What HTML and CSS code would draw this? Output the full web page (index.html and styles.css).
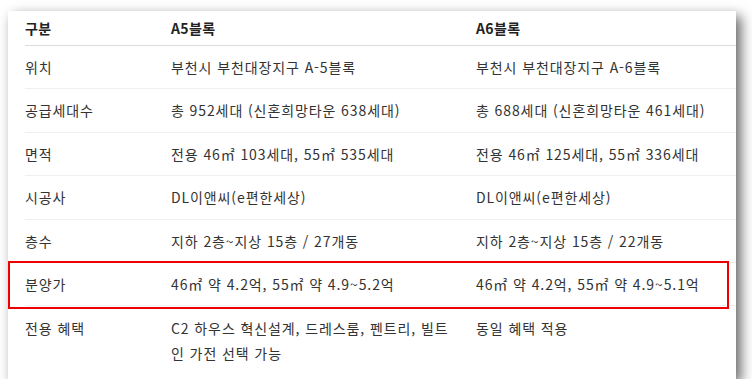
FILE: index.html
```html
<!DOCTYPE html>
<html lang="ko">
<head>
<meta charset="utf-8">
<link rel="stylesheet" href="styles.css">
</head>
<body>
<div class="card">
  <table class="spec">
    <colgroup><col class="c1"><col class="c2"><col class="c3"></colgroup>
    <thead>
      <tr><th>구분</th><th>A5블록</th><th>A6블록</th></tr>
    </thead>
    <tbody>
      <tr><td>위치</td><td>부천시 부천대장지구 A-5블록</td><td>부천시 부천대장지구 A-6블록</td></tr>
      <tr><td>공급세대수</td><td>총 952세대 (신혼희망타운 638세대)</td><td>총 688세대 (신혼희망타운 461세대)</td></tr>
      <tr><td>면적</td><td>전용 46㎡ 103세대, 55㎡ 535세대</td><td>전용 46㎡ 125세대, 55㎡ 336세대</td></tr>
      <tr><td>시공사</td><td>DL이앤씨(e편한세상)</td><td>DL이앤씨(e편한세상)</td></tr>
      <tr><td>층수</td><td>지하 2층~지상 15층 / 27개동</td><td>지하 2층~지상 15층 / 22개동</td></tr>
      <tr><td>분양가</td><td>46㎡ 약 4.2억, 55㎡ 약 4.9~5.2억</td><td>46㎡ 약 4.2억, 55㎡ 약 4.9~5.1억</td></tr>
      <tr><td>전용 혜택</td><td>C2 하우스 혁신설계, 드레스룸, 펜트리, 빌트인 가전 선택 가능</td><td>동일 혜택 적용</td></tr>
    </tbody>
  </table>
  <div class="highlight"></div>
</div>
</body>
</html>
```
FILE: styles.css
```css
html, body {
  margin: 0;
  padding: 0;
  background: #ffffff;
}
body {
  font-family: "Noto Sans CJK KR", "Noto Sans", sans-serif;
  font-size: 14px;
  letter-spacing: 0.9px;
  color: #333333;
}
.card {
  position: relative;
  box-sizing: border-box;
  width: 728px;
  height: 368px;
  margin: 11px 0 0 8px;
  padding: 0 0 0 17px;
  background: #ffffff;
  box-shadow: 5px 5px 12px rgba(0, 0, 0, 0.6);
}
.spec {
  width: 100%;
  border-collapse: collapse;
  table-layout: fixed;
}
.c1 { width: 146px; }
.c2 { width: 305px; }
.spec th {
  text-align: left;
  font-weight: 700;
  color: #222222;
  letter-spacing: 0.4px;
  padding: 6px 16px 5px 0;
  line-height: 23px;
  border-bottom: 1px solid #dcdcdc;
}
.spec td {
  text-align: left;
  vertical-align: top;
  padding: 10px 16px 9px 0;
  line-height: 23.4px;
  border-bottom: 1px solid #f0f0f0;
}
.spec tbody tr:last-child td {
  border-bottom: none;
  line-height: 25px;
}
.highlight {
  position: absolute;
  left: 0;
  top: 250px;
  width: 721px;
  height: 48px;
  box-sizing: border-box;
  border: 2px solid #ee0000;
  pointer-events: none;
}
```
